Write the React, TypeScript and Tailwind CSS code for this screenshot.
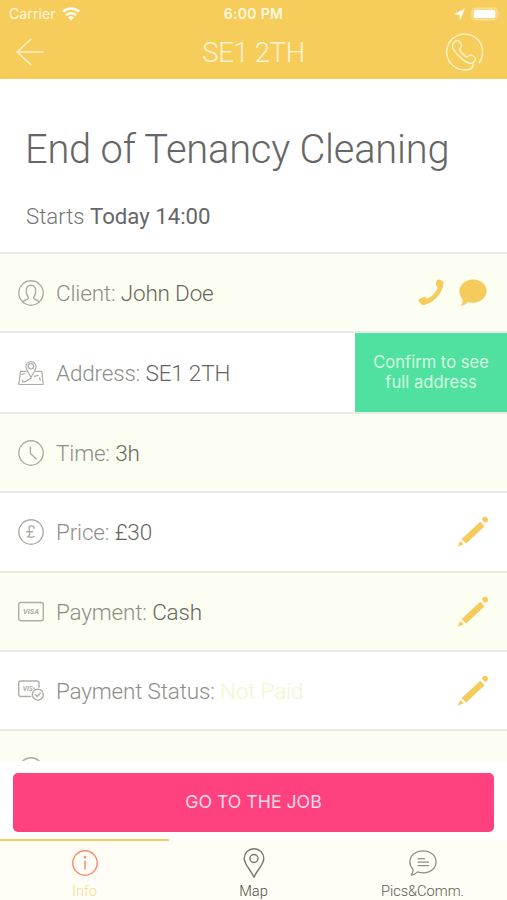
import type { ReactNode } from 'react';
import clsx from 'clsx';

interface JobRow {
  id: string;
  label: string;
  value: string;
  icon: ReactNode;
  action?: ReactNode;
  className: string;
  valueClass?: string;
}

interface Tab {
  label: string;
  icon: ReactNode;
  labelClass: string;
}

const iconProps = {
  viewBox: '0 0 26 26',
  fill: 'none',
  stroke: 'currentColor',
  strokeWidth: 1.4,
  strokeLinecap: 'round' as const,
  strokeLinejoin: 'round' as const,
};

function WifiIcon() {
  return (
    <svg className="w-[18px] h-[14px]" viewBox="0 0 18 14" fill="none" stroke="#fffdf5" strokeWidth="2.5">
      <path d="M1 4.7a11.6 11.6 0 0 1 16 0" />
      <path d="M4 8.2a7.2 7.2 0 0 1 10 0" />
      <path d="M9 13.6 6 10.6a4.3 4.3 0 0 1 6 0Z" fill="#fffdf5" stroke="none" />
    </svg>
  );
}

function StatusIcons() {
  return (
    <svg className="w-[48px] h-[14px]" viewBox="0 0 48 14">
      <path d="M10 1.5-1.2 7.3l5.6.5.6 5.4Z" transform="translate(1 0)" fill="#fffdf5" />
      <rect x="18" y="1.3" width="25" height="11.4" rx="3.4" fill="none" stroke="#f9dc93" strokeWidth="1.6" />
      <rect x="19.6" y="2.8" width="21.8" height="8.4" rx="1.8" fill="#fffefa" />
      <path d="M44.6 5v4c1.6-.6 1.6-3.4 0-4Z" fill="#f9dc93" />
    </svg>
  );
}

function BackIcon() {
  return (
    <svg className="w-7 h-7" viewBox="0 0 28 28" fill="none" stroke="#fff0c4" strokeWidth="1.5" strokeLinecap="round">
      <path d="M27 14H1.2M14.8 1.2 1.2 14l13.6 12.6" />
    </svg>
  );
}

function CallCircleIcon() {
  return (
    <svg className="w-[38px] h-[38px]" viewBox="0 0 38 38" fill="none" stroke="#fff0c4" strokeWidth="1.5" strokeLinecap="round" strokeLinejoin="round">
      <path d="M34.400 29.400A18 18 0 1 0 19 37c4.800 0 8.700-1.500 9-4.600l.1-2.300" />
      <path d="M8.300 10.300c1.300-1.800 3.200-3.300 4.700-2.600 1.800 1.300 3.500 3.800 3.600 5.200 0 1.500-2 2.100-2 3.500.1 2 5.700 7.400 7.500 7.500 1.300 0 2.200-2.200 3.700-1.800 2 .5 4.500 2.300 4.700 3.700 0 1.700-2.600 4.500-4.800 4.600-6.500-.3-18-12.600-18.300-17.400 0-.9.400-1.900.9-2.700Z" />
    </svg>
  );
}

function UserIcon() {
  return (
    <svg className="w-[26px] h-[26px]" {...iconProps}>
      <circle cx="13" cy="13" r="12.2" />
      <path d="M4.800 21.800c1-1.900 5.600-2.200 5.700-3.600.1-2-2-2.500-2-5.300-.5-1-.3-1.700 0-2.100-.6-3.600 1.500-5.500 4.500-5.500s5.100 1.900 4.500 5.500c.3.400.5 1.100 0 2.100 0 2.800-2.100 3.300-2 5.300.1 1.400 4.700 1.700 5.700 3.600" />
    </svg>
  );
}

function AddressIcon() {
  return (
    <svg className="w-[26px] h-[26px]" {...iconProps} strokeWidth={1.2}>
      <path d="M8.300 11.300H2.500L.8 24.500h24.400l-1.400-13.200h-6.100" />
      <path d="M13 17.400c-1.400-3.300-5-7.200-5-10.800a5 5 0 0 1 10 0c0 3.600-3.600 7.500-5 10.800Z" />
      <circle cx="13" cy="6.300" r="2.700" />
      <path d="M4.700 20.300c-.8.700-.2 1.600 1 1.500 3-.2 4.200-2.600 7.300-3.400" />
      <path d="m16.500 16.300 3.500-1M21.500 17.800l.8 2.200M3.800 14.300l2.500-.6" />
    </svg>
  );
}

function ClockIcon() {
  return (
    <svg className="w-[26px] h-[26px]" {...iconProps}>
      <circle cx="13" cy="13" r="12.2" />
      <path d="M12.400 7.100v6.300l6 5.500" />
    </svg>
  );
}

function PoundIcon() {
  return (
    <svg className="w-[26px] h-[26px]" {...iconProps}>
      <circle cx="13" cy="13" r="12.2" />
      <path d="M16.200 9.200c-.4-3.200-5.200-3-5.200.2 0 2.100 1.300 4.500.4 6.700-.4 1-1.200 1.700-2 2 2-.9 4.700.9 6.900-.6M8.900 12.800h5.800" />
    </svg>
  );
}

function CardIcon() {
  return (
    <svg className="w-[26px] h-[26px]" {...iconProps}>
      <rect x=".7" y="3.5" width="24.6" height="18.2" rx="2" />
      <text x="13" y="15.4" textAnchor="middle" textLength="16" lengthAdjust="spacingAndGlyphs" className="font-bold italic text-[7.5px]" fill="currentColor" stroke="none">
        VISA
      </text>
    </svg>
  );
}

function CardStatusIcon() {
  return (
    <svg className="w-[26px] h-[26px]" {...iconProps}>
      <path d="M12.600 18.500H2.700a2 2 0 0 1-2-2V5a2 2 0 0 1 2-2H19a2 2 0 0 1 2 2v4.200" />
      <text x="4.7" y="12.8" textLength="12.5" lengthAdjust="spacingAndGlyphs" className="font-bold italic text-[6.5px]" fill="currentColor" stroke="none">
        VIS•
      </text>
      <circle cx="19.800" cy="16.700" r="5.500" />
      <path d="m17.300 16.600 1.900 1.900 3.200-3.300" />
    </svg>
  );
}

function PhoneIcon() {
  return (
    <svg className="w-[26px] h-[27px]" viewBox="0 0 26 27" fill="#f5cb5c">
      <path d="M18 3c.6-2 2.400-3 4-2.300l2.500 1.200c.9.500 1.100 1.200 1 2.200C24.600 14 17.200 23.200 6.500 25.900c-1.500.4-2.700.2-3.300-.6L.8 22.200c-.7-1-.4-1.700.5-2.200l4.300-2.100c.9-.4 1.700-.2 2.300.6l1 1.300c4.800-1.900 8.900-6.200 10.800-11.400l-1.200-1.600c-.7-1-.8-2.300-.5-3.800Z" />
    </svg>
  );
}

function ChatIcon() {
  return (
    <svg className="w-[28px] h-[27px]" viewBox="0 0 28 27" fill="#f5cb5c">
      <path d="M14 .4c7.600 0 13.700 5.100 13.700 11.600S21.600 23.700 14 23.700c-1.700 0-3.400-.3-4.900-.8-1.900 1.900-4.500 3.500-7.700 3.900 1.700-1.900 2.400-3.900 2.200-6.600C1.500 18.200.4 15.400.4 12.300.4 5.700 6.400.4 14 .4Z" />
    </svg>
  );
}

function PencilIcon() {
  return (
    <svg className="w-8 h-8" viewBox="0 0 32 32" fill="#f5cb5c">
      <path d="M.7 30.800 3.200 25l3.600 3.200Z" />
      <path d="m4.400 23.300 18.800-17.500 4.400 4.500L9.200 27.500Z" />
      <path d="M25 4.100c.3-2.300 1.400-3.400 3-3.300 1.800.1 3 1.400 3 3 0 1.700-1.200 2.800-3.200 3Z" />
    </svg>
  );
}

function InfoIcon() {
  return (
    <svg className="w-[26px] h-[26px] text-[#f58a66]" {...iconProps}>
      <circle cx="13" cy="13" r="12.2" />
      <path d="M13 11.300v7.600" />
      <circle cx="13" cy="7.300" r=".6" fill="currentColor" />
    </svg>
  );
}

function PinIcon() {
  return (
    <svg className="w-[22px] h-[30px] text-[#77776f]" viewBox="0 0 22 30" fill="none" stroke="currentColor" strokeWidth="1.4" strokeLinejoin="round">
      <path d="M11 29.200C8.500 22.500 1.200 17.200 1.200 10.300a9.800 9.600 0 0 1 19.600 0c0 6.900-7.300 12.200-9.800 18.900Z" />
      <circle cx="11" cy="10.500" r="4" />
    </svg>
  );
}

function CommentsIcon() {
  return (
    <svg className="w-[28px] h-[26px] text-[#8f8f86]" viewBox="0 0 28 26" fill="none" stroke="currentColor" strokeWidth="1.3" strokeLinecap="round" strokeLinejoin="round">
      <path d="M14 .9c7.300 0 13.100 4.900 13.100 11S21.300 22.800 14 22.800c-1.900 0-3.700-.3-5.300-.9-1.600 1.700-3.800 2.900-6.500 3.100 1.500-1.900 2.200-3.600 1.800-5.900C2 17.200.9 14.600.9 11.900.9 5.800 6.700.9 14 .9Z" />
      <path d="M9.200 8.700h6.300M9.200 12.200h10.300M9.200 15.700h10.300" />
    </svg>
  );
}

function EditButton() {
  return (
    <button className="pr-[18px]" aria-label="Edit">
      <PencilIcon />
    </button>
  );
}

const rows: JobRow[] = [
  {
    id: 'client',
    label: 'Client:',
    value: 'John Doe',
    icon: <UserIcon />,
    className: 'h-[79px] bg-[#fdfef2]',
    action: (
      <div className="flex items-center gap-[15px] pr-5">
        <PhoneIcon />
        <ChatIcon />
      </div>
    ),
  },
  {
    id: 'address',
    label: 'Address:',
    value: 'SE1 2TH',
    icon: <AddressIcon />,
    className: 'h-[81px] bg-white',
    action: (
      <button className="w-[152px] h-full pb-0.5 bg-[#50e0a0] font-['Inter'] font-normal text-[16.6px] leading-5 text-[#d5fbe3]">
        Confirm to see
        <br />
        full address
      </button>
    ),
  },
  { id: 'time', label: 'Time:', value: '3h', icon: <ClockIcon />, className: 'h-[79px] bg-[#fdfef2]' },
  { id: 'price', label: 'Price:', value: '£30', icon: <PoundIcon />, className: 'h-[80px] bg-white', action: <EditButton /> },
  { id: 'payment', label: 'Payment:', value: 'Cash', icon: <CardIcon />, className: 'h-[79px] bg-[#fdfef2]', action: <EditButton /> },
  {
    id: 'status',
    label: 'Payment Status:',
    value: 'Not Paid',
    icon: <CardStatusIcon />,
    className: 'h-[79px] bg-white',
    valueClass: 'text-[#f3f6cb]',
    action: <EditButton />,
  },
  { id: 'next', label: '', value: '', icon: <ClockIcon />, className: 'h-[79px] bg-[#fdfef2]' },
];

const tabs: Tab[] = [
  { label: 'Info', icon: <InfoIcon />, labelClass: 'text-[#f6dd8c]' },
  { label: 'Map', icon: <PinIcon />, labelClass: 'text-[#4c4c46]' },
  { label: 'Pics&Comm.', icon: <CommentsIcon />, labelClass: 'text-[#5c5c55]' },
];

export default function App() {
  return (
    <div className="flex flex-col w-full h-[900px] overflow-hidden bg-white font-['Roboto',sans-serif] font-light">
      <header className="h-[79px] shrink-0 bg-[#f6cd5b]">
        <div className="grid grid-cols-3 items-center h-[27px] px-[9px] font-['Inter'] text-[#fff8e0]">
          <div className="flex items-center gap-[6px] text-[14px] font-normal tracking-[0.1px]">
            Carrier
            <WifiIcon />
          </div>
          <div className="text-center text-[14px] font-semibold tracking-[0.3px]">6:00 PM</div>
          <div className="flex justify-end -mr-1">
            <StatusIcons />
          </div>
        </div>
        <div className="grid grid-cols-[1fr_auto_1fr] items-center h-[50px] pl-4 pr-[24px]">
          <button aria-label="Back">
            <BackIcon />
          </button>
          <h1 className="pl-2 pt-[3px] text-center text-[27.4px] tracking-[-0.3px] text-[#fff4d3]">SE1 2TH</h1>
          <button className="justify-self-end" aria-label="Call">
            <CallCircleIcon />
          </button>
        </div>
      </header>

      <section className="h-[173px] shrink-0 pl-[26px] pt-[47px]">
        <h2 className="-ml-px text-[39.8px] tracking-[-0.2px] leading-[48px] text-[#666] whitespace-nowrap">End of Tenancy Cleaning</h2>
        <p className="mt-[28px] text-[22.2px] leading-7 text-[#757575]">
          Starts <span className="font-normal text-[#666]">Today 14:00</span>
        </p>
      </section>

      <main className="h-[509px] shrink-0 overflow-hidden">
        {rows.map((row) => (
          <div key={row.id} className={clsx('flex items-center border-t-2 border-[#e9e9e6]', row.className)}>
            <div className="w-[56px] pl-[18px] text-[#adada8]">{row.icon}</div>
            <div className="flex-1 pt-[2px] text-[22.5px] tracking-[-0.18px] text-[#8e8e8a] whitespace-nowrap">
              {row.label} <span className={row.valueClass || 'text-[#666661]'}>{row.value}</span>
            </div>
            {row.action}
          </div>
        ))}
      </main>

      <div className="h-[78px] shrink-0 px-[13px] pt-3">
        <button className="w-full h-[59px] rounded-[5px] bg-[#ff4180] font-['Inter'] font-normal text-[17.7px] text-[#ffdcea]">GO TO THE JOB</button>
      </div>

      <nav className="grid grid-cols-3 flex-1 bg-[#fffdf5]">
        {tabs.map((tab, idx) => (
          <button
            key={tab.label}
            className={clsx('flex flex-col items-center border-t-2', idx === 0 ? 'border-[#f5cb5c]' : 'border-[#fffefb]')}
          >
            <span className="flex items-center justify-center h-[30px] mt-[7px]">{tab.icon}</span>
            <span className={clsx('mt-[3px] text-[14.6px] leading-5', tab.labelClass)}>{tab.label}</span>
          </button>
        ))}
      </nav>
    </div>
  );
}
